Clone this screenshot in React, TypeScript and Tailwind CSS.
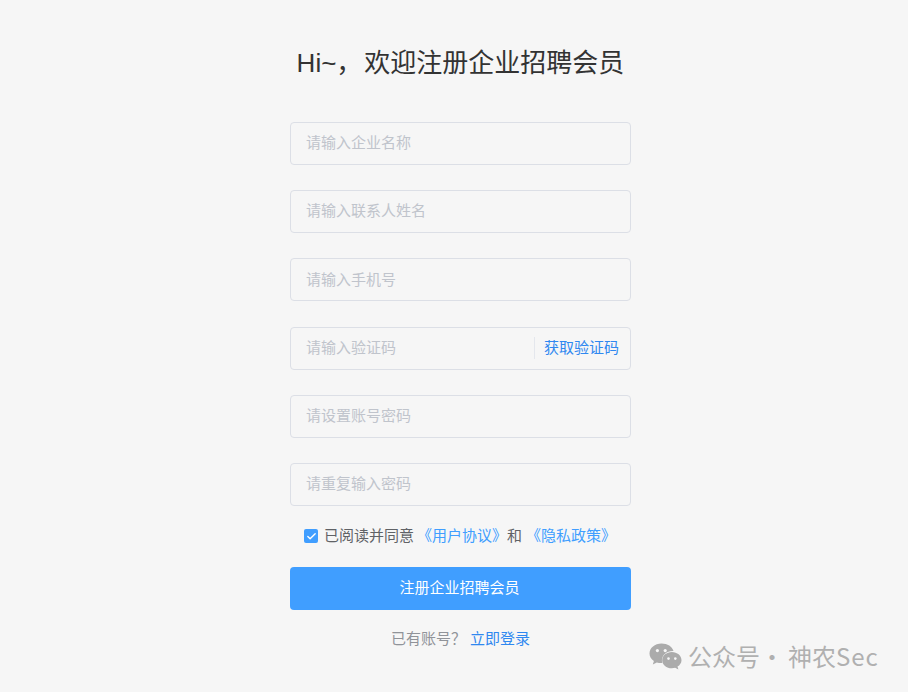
import { Check } from "lucide-react"

const FONT = "font-['Liberation_Sans','Noto_Sans_CJK_SC',sans-serif]"

const FIELDS = [
  "请输入企业名称",
  "请输入联系人姓名",
  "请输入手机号",
  "请输入验证码",
  "请设置账号密码",
  "请重复输入密码",
]

function WechatIcon() {
  return (
    <svg width="33" height="27" viewBox="0 0 33 27" className="text-[#ababab]">
      {/* back bubble */}
      <path
        d="M12.5 0.5C5.9 0.5 0.5 4.9 0.5 10.4c0 3.1 1.7 5.8 4.4 7.6l-1.1 3.5 4-2.1c1.4.4 2.9.6 4.6.6h.9c-.3-.9-.4-1.8-.4-2.7 0-5.2 4.9-9.3 10.9-9.3h.7C23.4 3.5 18.4.5 12.5.5z"
        fill="currentColor"
      />
      <circle cx="8.4" cy="7.6" r="1.6" fill="#f6f6f6" />
      <circle cx="16.2" cy="7.6" r="1.6" fill="#f6f6f6" />
      {/* front bubble */}
      <path
        d="M32.5 17.2c0-4.5-4.4-8.1-9.6-8.1-5.400 0-9.700 3.600-9.700 8.100s4.300 8.100 9.700 8.100c1.100 0 2.200-.2 3.300-.5l3.200 1.700-.9-2.900c2.400-1.500 4-3.800 4-6.400z"
        fill="currentColor"
      />
      <circle cx="19.500" cy="15.600" r="1.300" fill="#f6f6f6" />
      <circle cx="26.300" cy="15.600" r="1.300" fill="#f6f6f6" />
    </svg>
  )
}

export default function App() {
  return (
    <div className={`relative flex h-[692px] flex-col items-center overflow-hidden bg-[#f6f6f6] pl-[13px] ${FONT}`}>
      <h1 className="mt-[45px] h-[37px] text-[26px] leading-[37px] font-normal text-[#333]">
        <span className="mr-[2px]">Hi~，</span>欢迎注册企业招聘会员
      </h1>

      <form className="mt-[40px] flex w-[341px] flex-col">
        <div className="flex flex-col gap-[25.2px]">
          {FIELDS.map((placeholder) => (
            <div
              key={placeholder}
              className="flex h-[43px] items-center rounded-[4px] border border-[#dcdfe6] bg-[#f6f6f6] pl-[15px] pr-[11px]"
            >
              <input
                placeholder={placeholder}
                className="min-w-0 flex-1 bg-transparent text-[15px] text-[#606266] outline-none placeholder:text-[#c0c4cc]"
              />
              {placeholder === "请输入验证码" && (
                <span className="ml-2 border-l border-[#e4e7ed] pl-[9px] text-[15px] leading-[22px] text-[#2f88f0]">
                  获取验证码
                </span>
              )}
            </div>
          ))}
        </div>

        <div className="mt-[19.5px] flex h-[22px] items-center pl-[14px] text-[15px] text-[#606266]">
          <span className="mr-[6px] flex size-[14px] items-center justify-center rounded-[2px] bg-[#409eff]">
            <Check className="size-[11px] text-white" strokeWidth={3} />
          </span>
          <span>已阅读并同意</span>
          <span className="ml-[3px] text-[#409eff]">《用户协议》</span>
          <span>和</span>
          <span className="ml-[4px] text-[#409eff]">《隐私政策》</span>
        </div>

        <button
          type="button"
          className="mt-[19.5px] h-[43px] rounded-[4px] bg-[#409eff] pr-[2px] text-[15px] text-white"
        >
          注册企业招聘会员
        </button>

        <p className="mt-[18px] text-center text-[15px] leading-[22px] text-[#909399]">
          已有账号？<span className="ml-[4px] text-[#2f88f0]">立即登录</span>
        </p>
      </form>

      {/* watermark over the page */}
      <div className="absolute left-[649px] top-[642px] flex items-center gap-[6px] text-[24px] leading-[28px] text-[#b0b0b0]">
        <WechatIcon />
        <span className="font-['Noto_Sans_CJK_SC',sans-serif]">
          公众号<span className="mr-[4px]">·</span>神农<span className="tracking-[1px]">Sec</span>
        </span>
      </div>
    </div>
  )
}
